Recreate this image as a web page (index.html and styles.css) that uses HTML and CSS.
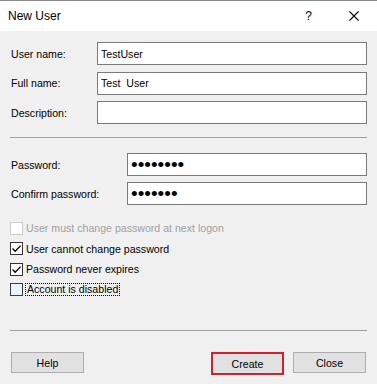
FILE: index.html
```html
<!DOCTYPE html>
<html lang="en">
<head>
    <meta charset="UTF-8">
    <meta name="viewport" content="width=device-width, initial-scale=1.0">
    <title>New User</title>
    <link rel="stylesheet" href="styles.css">
</head>
<body>
    <div class="dialog">
        <div class="titlebar">
            <span class="title">New User</span>
            <span class="help">?</span>
            <svg class="close-x" width="10" height="10" viewBox="0 0 10 10">
                <path d="M0.5 0.5 L9.5 9.5 M9.5 0.5 L0.5 9.5" stroke="#000" stroke-width="1.1" fill="none"/>
            </svg>
        </div>

        <div class="content">
            <div class="fields names">
                <label>User name:</label>
                <input class="field" type="text" value="TestUser">
                <label>Full name:</label>
                <input class="field" type="text" value="Test  User">
                <label>Description:</label>
                <input class="field" type="text" value="">
            </div>

            <div class="sep"></div>

            <div class="fields passwords">
                <label>Password:</label>
                <input class="field secret" type="password" value="P@ssw0rd">
                <label>Confirm password:</label>
                <input class="field secret" type="password" value="P@ssw0r">
            </div>

            <div class="options">
                <div class="option disabled">
                    <span class="box"></span>
                    <span>User must change password at next logon</span>
                </div>
                <div class="option">
                    <span class="box">
                        <svg width="11" height="11" viewBox="0 0 11 11"><path d="M1.5 5.5 L4.2 8.2 L9.6 2.6" stroke="#000" stroke-width="1.3" fill="none"/></svg>
                    </span>
                    <span>User cannot change password</span>
                </div>
                <div class="option">
                    <span class="box">
                        <svg width="11" height="11" viewBox="0 0 11 11"><path d="M1.5 5.5 L4.2 8.2 L9.6 2.6" stroke="#000" stroke-width="1.3" fill="none"/></svg>
                    </span>
                    <span>Password never expires</span>
                </div>
                <div class="option focused">
                    <span class="box hover"></span>
                    <span class="focus-ring">Account is disabled</span>
                </div>
            </div>

            <div class="sep lower"></div>

            <div class="buttons">
                <button class="btn">Help</button>
                <button class="btn marked">Create</button>
                <button class="btn">Close</button>
            </div>
        </div>
    </div>
</body>
</html>
```

FILE: styles.css
```css
body {
    margin: 0;
    background-color: #f0f0f0;
    font-family: "Liberation Sans", Arial, sans-serif;
    font-size: 10.6px;
    color: #000;
    overflow: hidden;
}
.dialog {
    width: 377px;
    height: 384px;
    display: flex;
    flex-direction: column;
}
.titlebar {
    height: 30px;
    border-top: 1px solid #8a8a8a;
    background-color: #fff;
    display: flex;
    align-items: center;
    padding: 0 18px 0 8px;
}
.title {
    flex: 1;
    font-size: 12px;
}
.help {
    font-size: 12px;
    margin-right: 37px;
}
.close-x {
    display: block;
}
.content {
    padding: 11px 10px 0 10px;
}
.fields {
    display: grid;
    grid-template-columns: 87px 1fr;
    row-gap: 6.5px;
    align-items: center;
}
.fields label {
    padding-left: 1px;
}
.passwords {
    grid-template-columns: 117px 1fr;
    margin-top: 15px;
    row-gap: 6px;
}
.field {
    height: 23px;
    box-sizing: border-box;
    border: 1px solid #7a7a7a;
    border-radius: 0;
    background-color: #fff;
    padding: 0 3px;
    margin: 0;
    font-family: "Liberation Sans", Arial, sans-serif;
    font-size: 10.6px;
    color: #000;
    outline: none;
    width: 100%;
}
.secret {
    font-size: 19px;
    padding-top: 0;
}
.sep {
    height: 0;
    border-top: 1px solid #a0a0a0;
    margin-top: 13px;
}
.sep.lower {
    margin-top: 30px;
}
.options {
    margin-top: 13px;
}
.option {
    height: 20.5px;
    display: flex;
    align-items: center;
}
.box {
    width: 13px;
    height: 13px;
    box-sizing: border-box;
    border: 1px solid #333;
    background-color: #fff;
    margin-right: 3px;
    display: flex;
    align-items: center;
    justify-content: center;
}
.box svg {
    display: block;
}
.disabled {
    color: #a0a0a0;
}
.disabled .box {
    border-color: #cccccc;
}
.box.hover {
    background-color: #e8f5fb;
    border-color: #2f3f4a;
}
.focus-ring {
    border: 1px dotted #000;
    padding: 0 1px;
    margin-left: -1px;
    line-height: 11px;
}
.buttons {
    display: flex;
    align-items: flex-start;
    margin-top: 21px;
    padding: 0 1px;
}
.btn {
    width: 73px;
    height: 21px;
    box-sizing: border-box;
    border: 1px solid #adadad;
    background-color: #e1e1e1;
    font-family: "Liberation Sans", Arial, sans-serif;
    font-size: 10.6px;
    color: #000;
    padding: 0;
    margin: 0;
}
.marked {
    height: 23px;
    border: 2px solid #d4202e;
    margin-left: auto;
    margin-right: 9px;
}
```
